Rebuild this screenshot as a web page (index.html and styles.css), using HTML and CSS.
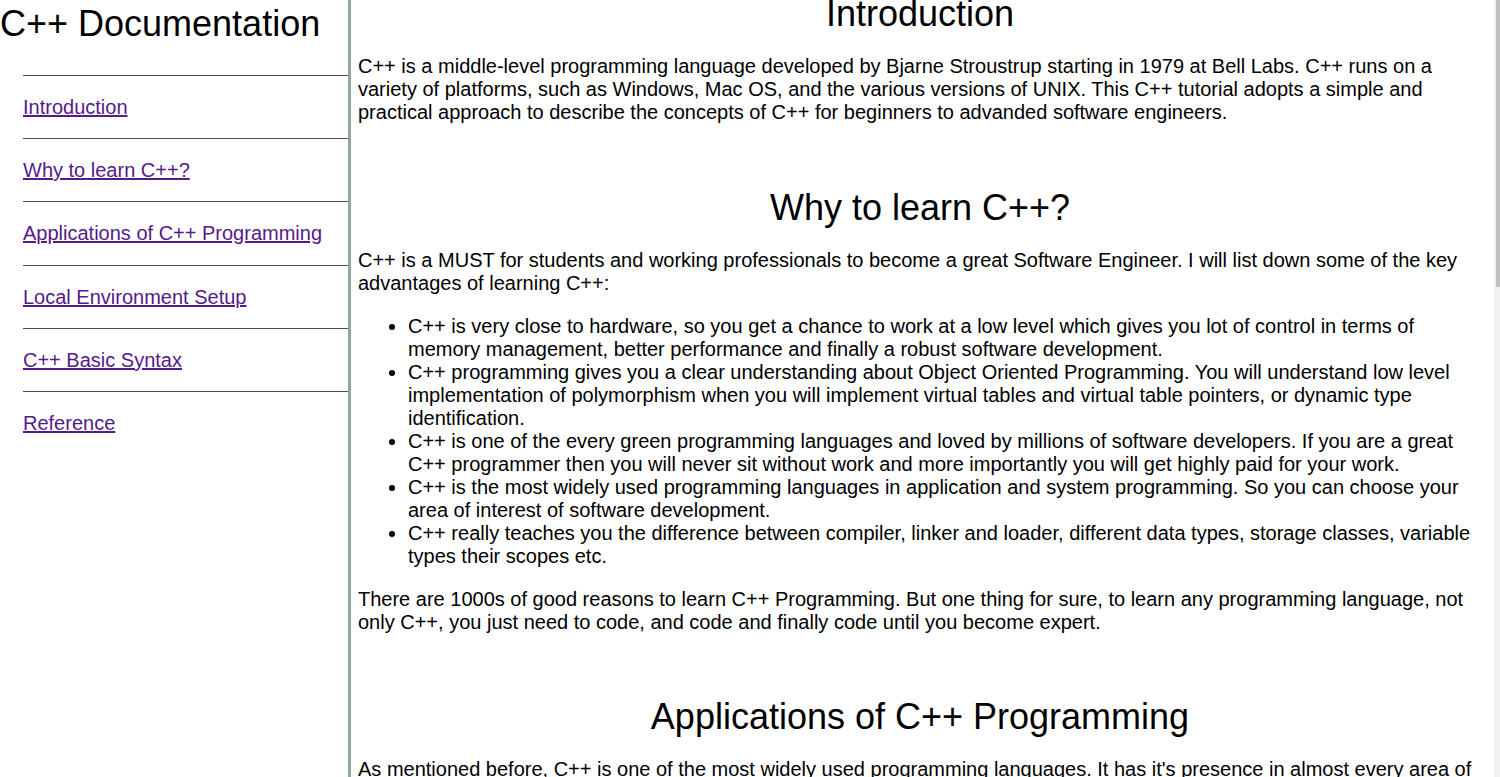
FILE: index.html
```html
<!DOCTYPE html>
<html lang="en">
<head>
<meta charset="utf-8">
<title>C++ Documentation</title>
<link rel="stylesheet" href="styles.css">
</head>
<body>
<div class="page">
  <nav class="navbar" id="navbar">
    <header class="nav-title">C++ Documentation</header>
    <ul class="nav-list">
      <li class="nav-item"><a class="nav-link" href="#Introduction">Introduction</a></li>
      <li class="nav-item"><a class="nav-link" href="#Why_to_learn_C++?">Why to learn C++?</a></li>
      <li class="nav-item"><a class="nav-link" href="#Applications_of_C++_Programming">Applications of C++ Programming</a></li>
      <li class="nav-item"><a class="nav-link" href="#Local_Environment_Setup">Local Environment Setup</a></li>
      <li class="nav-item"><a class="nav-link" href="#C++_Basic_Syntax">C++ Basic Syntax</a></li>
      <li class="nav-item"><a class="nav-link" href="#Reference">Reference</a></li>
    </ul>
  </nav>
  <main class="main-doc" id="main-doc">
    <div class="doc">
      <section class="main-section" id="Introduction">
        <header class="section-title">Introduction</header>
        <p class="text">C++ is a middle-level programming language developed by Bjarne Stroustrup starting in 1979 at Bell Labs. C++ runs on a variety of platforms, such as Windows, Mac OS, and the various versions of UNIX. This C++ tutorial adopts a simple and practical approach to describe the concepts of C++ for beginners to advanded software engineers.</p>
      </section>
      <section class="main-section" id="Why_to_learn_C++?">
        <header class="section-title">Why to learn C++?</header>
        <p class="text">C++ is a MUST for students and working professionals to become a great Software Engineer. I will list down some of the key advantages of learning C++:</p>
        <ul class="list">
          <li>C++ is very close to hardware, so you get a chance to work at a low level which gives you lot of control in terms of memory management, better performance and finally a robust software development.</li>
          <li>C++ programming gives you a clear understanding about Object Oriented Programming. You will understand low level implementation of polymorphism when you will implement virtual tables and virtual table pointers, or dynamic type identification.</li>
          <li>C++ is one of the every green programming languages and loved by millions of software developers. If you are a great C++ programmer then you will never sit without work and more importantly you will get highly paid for your work.</li>
          <li>C++ is the most widely used programming languages in application and system programming. So you can choose your area of interest of software development.</li>
          <li>C++ really teaches you the difference between compiler, linker and loader, different data types, storage classes, variable types their scopes etc.</li>
        </ul>
        <p class="text">There are 1000s of good reasons to learn C++ Programming. But one thing for sure, to learn any programming language, not only C++, you just need to code, and code and finally code until you become expert.</p>
      </section>
      <section class="main-section" id="Applications_of_C++_Programming">
        <header class="section-title">Applications of C++ Programming</header>
        <p class="text">As mentioned before, C++ is one of the most widely used programming languages. It has it's presence in almost every area of software development. I'm going to list few of them here:</p>
        <ul class="list">
          <li>Application Software Development - C++ programming has been used in developing almost all the major Operating Systems like Windows, Mac OSX and Linux. Apart from the operating systems, the core part of many browsers like Mozilla Firefox and Chrome have been written using C++. C++ also has been used in developing the most popular database system called MySQL.</li>
          <li>Programming Languages Development - C++ has been used extensively in developing new programming languages like C#, Java, JavaScript, Perl, UNIX's C Shell, PHP and Python, and Verilog etc.</li>
          <li>Computation Programming - C++ is the best friends of scientists because of fast speed and computational efficiencies.</li>
          <li>Games Development - C++ is extremely fast which allows programmers to do procedural programming for CPU intensive functions and provides greater control over hardware, because of which it has been widely used in development of gaming engines.</li>
          <li>Embedded System - C++ is being heavily used in developing Medical and Engineering Applications like softwares for MRI machines, high-end CAD/CAM systems etc.</li>
        </ul>
        <p class="text">This list goes on, there are various areas where software developers are happily using C++ to provide great softwares. I highly recommend you to learn C++ and contribute great softwares to the community.</p>
      </section>
      <section class="main-section" id="Local_Environment_Setup">
        <header class="section-title">Local Environment Setup</header>
        <p class="text">If you are still willing to set up your environment for C++, you need to have the following two softwares on your computer.</p>
        <ul class="list">
          <li>Text Editor - This will be used to type your program. Examples of few editors include Windows Notepad, OS Edit command, Brief, Epsilon, EMACS, and vim or vi.</li>
          <li>C++ Compiler - This is an actual C++ compiler, which will be used to compile your source code into final executable program.</li>
        </ul>
      </section>
      <section class="main-section" id="C++_Basic_Syntax">
        <header class="section-title">C++ Basic Syntax</header>
        <p class="text">When we consider a C++ program, it can be defined as a collection of objects that communicate via invoking each other's methods. Let us now briefly look into what a class, object, methods, and instant variables mean.</p>
        <pre class="code">#include &lt;iostream&gt;
using namespace std;

int main() {
   cout &lt;&lt; "Hello World";
   return 0;
}</pre>
      </section>
      <section class="main-section" id="Reference">
        <header class="section-title">Reference</header>
        <p class="text">All the documentation in this page is taken from tutorialspoint.</p>
      </section>
    </div>
  </main>
  <div class="scrollbar" aria-hidden="true">
    <div class="scrollbar-thumb"></div>
  </div>
</div>
</body>
</html>
```

FILE: styles.css
```css
html, body {
  margin: 0;
  padding: 0;
  height: 100%;
  overflow: hidden;
  background: #ffffff;
}

body {
  font-family: "Liberation Sans", Arial, sans-serif;
  color: #000000;
}

.page {
  display: flex;
  height: 100vh;
}

.navbar {
  flex: 0 0 348px;
  width: 348px;
  height: 100vh;
  border-right: 3px solid rgba(0, 22, 22, 0.4);
}

.nav-title {
  font-size: 36px;
  line-height: 41px;
  margin: 3px 0 31px 0;
  white-space: nowrap;
}

.nav-list {
  list-style: none;
  margin: 0 0 0 23px;
  padding: 0;
}

.nav-item {
  border-top: 1px solid #4f4f4f;
  padding: 20px 0 19.2px;
  font-size: 20px;
  line-height: 23px;
}

.nav-link {
  color: #551a8b;
  text-decoration: underline;
}

.main-doc {
  flex: 1 1 auto;
  min-width: 0;
  height: 100vh;
  overflow: hidden;
  padding: 0 12px 0 7px;
}

.scrollbar {
  flex: 0 0 6px;
  height: 100vh;
  background: #f1f1f1;
  display: flex;
  justify-content: flex-end;
}

.scrollbar-thumb {
  width: 4px;
  height: 287px;
  background: #c1c1c1;
}

.doc {
  margin-top: -7px;
}

.main-section {
  padding-bottom: 42.5px;
}

.section-title {
  font-size: 36px;
  line-height: 41px;
  text-align: center;
  margin: 0 0 21px;
}

.text {
  font-size: 20px;
  line-height: 23px;
  margin: 0 0 20px;
}

.list {
  font-size: 20px;
  line-height: 23px;
  margin: 0 0 20px;
  padding-left: 50px;
}

.code {
  font-family: "Liberation Mono", "Courier New", monospace;
  font-size: 18px;
  line-height: 22px;
  background: #f4f4f4;
  padding: 12px 16px;
  margin: 0 0 20px;
}
```
